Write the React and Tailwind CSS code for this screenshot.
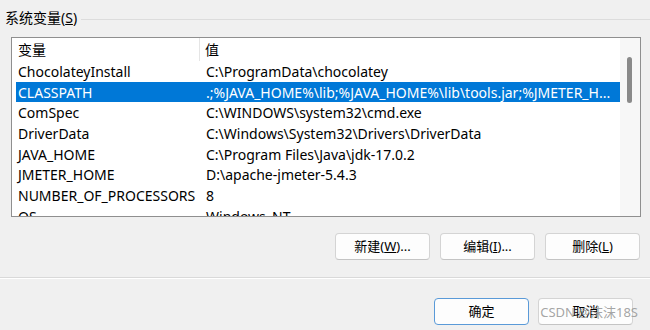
import React from 'react';

const rows = [
  ['ChocolateyInstall', 'C:\\ProgramData\\chocolatey'],
  ['CLASSPATH', '.;%JAVA_HOME%\\lib;%JAVA_HOME%\\lib\\tools.jar;%JMETER_H...'],
  ['ComSpec', 'C:\\WINDOWS\\system32\\cmd.exe'],
  ['DriverData', 'C:\\Windows\\System32\\Drivers\\DriverData'],
  ['JAVA_HOME', 'C:\\Program Files\\Java\\jdk-17.0.2'],
  ['JMETER_HOME', 'D:\\apache-jmeter-5.4.3'],
  ['NUMBER_OF_PROCESSORS', '8'],
  ['OS', 'Windows_NT'],
];

const font = { fontFamily: '"Noto Sans", "Noto Sans CJK SC", sans-serif' };

const Btn = ({ children, primary }) => (
  <button
    className={
      primary
        ? 'w-[95px] h-[27px] rounded-[4px] bg-[#fdfdfd] border border-[#5a9ad8] text-[13px] text-black flex items-center justify-center'
        : 'w-[95px] h-[27px] rounded-[4px] bg-[#fdfdfd] border border-[#d4d4d4] border-b-[#c4c4c4] text-[13px] text-black flex items-center justify-center'
    }
  >
    {children}
  </button>
);

export default function App() {
  return (
    <div className="w-[650px] h-[330px] bg-[#f0f0f0] overflow-hidden relative text-black" style={font}>
      <div className="flex items-center h-[20px] mt-[8px] pl-[5px]">
        <span className="text-[14px] leading-none pr-[4px]">
          系统变量(<span className="underline">S</span>)
        </span>
        <div className="flex-1 h-px bg-[#dcdcdc] mt-[2px]" />
      </div>

      <div className="ml-[11px] mt-[9px] w-[630px] h-[180px] border border-[#8f8f8f] bg-white flex overflow-hidden">
        <div className="flex-1 flex flex-col overflow-hidden">
          <div className="h-[23px] flex items-center shrink-0 text-[14px]">
            <div className="w-[188px] pl-[6px] border-r border-[#e5e5e5] h-full flex items-center">变量</div>
            <div className="pl-[5px]">值</div>
          </div>
          {rows.map(([k, v], i) => (
            <div
              key={k}
              className={
                'ml-[4px] h-[20.7px] shrink-0 flex items-center text-[14px] whitespace-nowrap ' +
                (i === 1 ? 'bg-[#0078d7] text-white' : '')
              }
            >
              <div className="w-[188px] pl-[2px]">{k}</div>
              <div className="pl-[2px]">{v}</div>
            </div>
          ))}
        </div>
        <div className="w-[20px] bg-[#f7f7f7] flex justify-center pt-[19px] shrink-0">
          <div className="w-[5px] h-[46px] rounded-full bg-[#8a8a8a] ml-[-2px]" />
        </div>
      </div>

      <div className="flex justify-end gap-[10px] pr-[10px] mt-[16px]">
        <Btn>新建(<span className="underline">W</span>)...</Btn>
        <Btn>编辑(<span className="underline">I</span>)...</Btn>
        <Btn>删除(<span className="underline">L</span>)</Btn>
      </div>

      <div className="mt-[17px] h-px bg-[#d9d9d9]" />
      <div className="h-px bg-white" />

      <div className="flex justify-end gap-[9px] pr-[17px] mt-[19px]">
        <Btn primary>确定</Btn>
        <Btn>取消</Btn>
      </div>

      <div className="absolute right-[12px] bottom-[8px] text-[13px] text-[#9a9a9a]/90">CSDN @沫沫18S</div>
    </div>
  );
}
